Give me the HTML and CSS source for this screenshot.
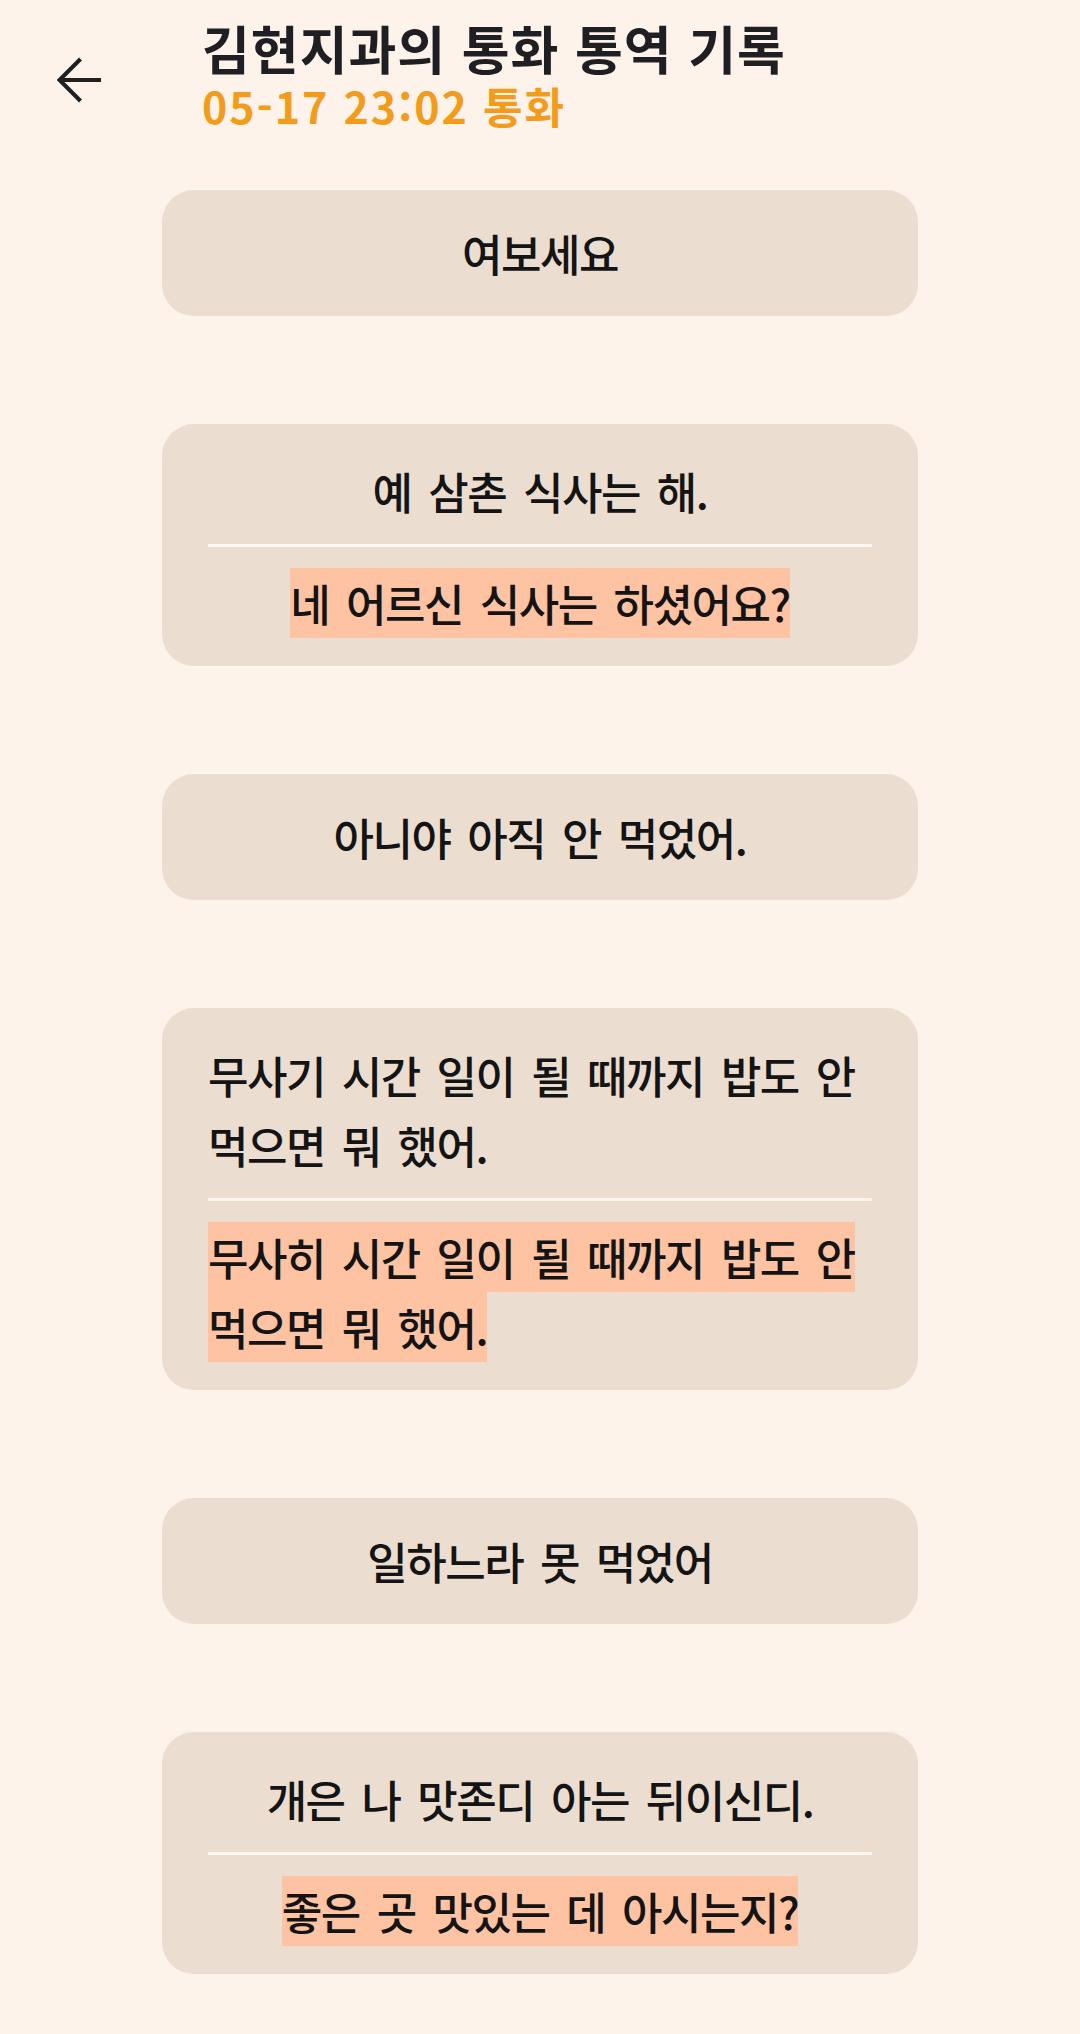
FILE: index.html
```html
<!DOCTYPE html>
<html lang="ko">
<head>
<meta charset="utf-8">
<title>통화 통역 기록</title>
<link rel="stylesheet" href="styles.css">
</head>
<body>
<header class="top">
  <button class="back" aria-label="뒤로">
    <svg width="48" height="48" viewBox="0 0 48 48" aria-hidden="true">
      <path d="M46 24H4 M25.5 3 L4.5 24 L25.5 45" fill="none" stroke="#1f1f22" stroke-width="4"/>
    </svg>
  </button>
  <div class="heading">
    <h1 class="title">김현지과의 통화 통역 기록</h1>
    <p class="sub">05-17 23:02 통화</p>
  </div>
</header>
<main class="list">
  <section class="card">
    <p class="orig">여보세요</p>
  </section>
  <section class="card card--pair">
    <p class="orig">예 삼촌 식사는 해.</p>
    <hr class="divider">
    <p class="trans"><span class="hl">네 어르신 식사는 하셨어요?</span></p>
  </section>
  <section class="card">
    <p class="orig">아니야 아직 안 먹었어.</p>
  </section>
  <section class="card card--pair">
    <p class="orig">무사기 시간 일이 될 때까지 밥도 안 먹으면 뭐 했어.</p>
    <hr class="divider">
    <p class="trans"><span class="hl">무사히 시간 일이 될 때까지 밥도 안 먹으면 뭐 했어.</span></p>
  </section>
  <section class="card">
    <p class="orig">일하느라 못 먹었어</p>
  </section>
  <section class="card card--pair">
    <p class="orig">개은 나 맛존디 아는 뒤이신디.</p>
    <hr class="divider">
    <p class="trans"><span class="hl">좋은 곳 맛있는 데 아시는지?</span></p>
  </section>
</main>
</body>
</html>
```
FILE: styles.css
```css
html, body {
  margin: 0;
  padding: 0;
}

body {
  background: #fdf3ea;
  font-family: "Noto Sans CJK KR", "Noto Sans", sans-serif;
  color: #141414;
}

.top {
  display: flex;
  align-items: flex-start;
  height: 190px;
  box-sizing: border-box;
  padding: 20px 0 0 55px;
}

.back {
  display: block;
  width: 48px;
  height: 48px;
  margin-top: 36px;
  padding: 0;
  border: 0;
  background: none;
}

.back svg {
  display: block;
}

.heading {
  margin-left: 99px;
}

.title {
  margin: 0;
  font-size: 52px;
  font-weight: 700;
  line-height: 56px;
  letter-spacing: 1px;
  color: #1f1f23;
}

.sub {
  margin: 4px 0 0;
  font-size: 43px;
  font-weight: 700;
  line-height: 50px;
  letter-spacing: 2px;
  color: #f39c1b;
}

.list {
  display: flex;
  flex-direction: column;
  align-items: center;
  gap: 108px;
  padding-bottom: 66px;
}

.card {
  width: 756px;
  box-sizing: border-box;
  padding: 28px 46px;
  background: #ebddd0;
  border-radius: 32px;
  display: flex;
  flex-direction: column;
  align-items: center;
}

.card--pair {
  padding-top: 32px;
}

.orig,
.trans {
  margin: 0;
  max-width: 100%;
  font-size: 44px;
  font-weight: 500;
  line-height: 70px;
  letter-spacing: -1.5px;
  word-spacing: 6px;
  color: #141414;
  word-break: keep-all;
}

.divider {
  align-self: stretch;
  height: 3px;
  margin: 18px 0 21px;
  border: 0;
  background: #fbf6ef;
}

.hl {
  background: #fec3a2;
  padding: 3px 0;
}
```
